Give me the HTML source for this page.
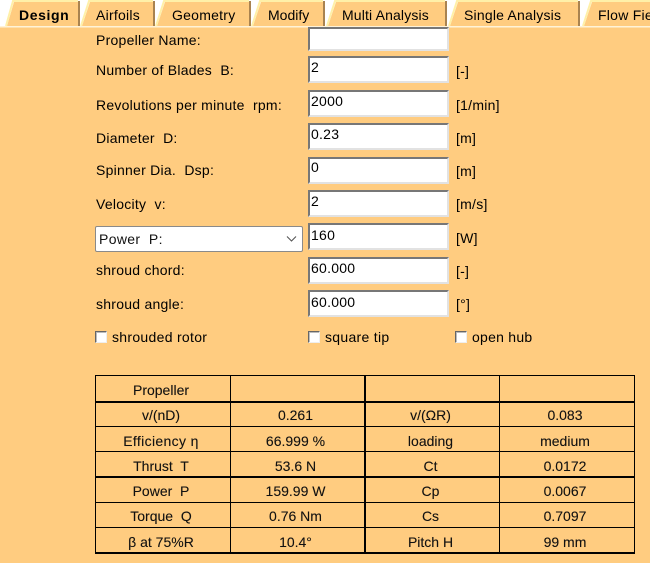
<!DOCTYPE html>
<html><head><meta charset="utf-8"><style>
html,body{margin:0;padding:0}
body{width:650px;height:563px;overflow:hidden;background:#ffcc80;position:relative;font-family:"Liberation Sans",sans-serif;font-size:14px;color:#000;letter-spacing:.25px}
.t{position:absolute;white-space:pre;line-height:16px}
.i{position:absolute;left:308px;width:137px;background:#fff;border:2px solid;border-color:#777 #e2e2e2 #e2e2e2 #777;line-height:16px;box-sizing:content-box}
.i span{position:absolute;left:1px;top:1px;color:#000;white-space:pre}
.c{position:absolute;width:10px;height:10px;top:331px;background:#fff;border:1px solid;border-color:#666 #eee #eee #666;box-shadow:inset 1px 1px 0 #bbb}
.g{position:absolute;background:#000}
.d{position:absolute;white-space:pre;text-align:center;font-size:14px;line-height:16px;color:#111;letter-spacing:0;text-shadow:0 0 .5px rgba(0,0,0,.4)}
</style></head><body>
<svg style="position:absolute;left:0;top:0" width="650" height="28">
<rect width="650" height="26" fill="#fff"/>
<rect y="26" width="650" height="1.5" fill="#fff3d8"/>
<g fill="#ffcc80" stroke="none">
<polygon points="7,26 14,2 78,2 78,26"/>
<polygon points="82,26 90,2 153,2 153,26"/>
<polygon points="157,26 165,2 249,2 249,26"/>
<polygon points="253,26 261,2 323,2 323,26"/>
<polygon points="328,26 336,2 445,2 445,26"/>
<polygon points="450,26 458,2 578,2 578,26"/>
<polygon points="584,26 592,2 650,2 650,26"/>
</g>
<g fill="none" stroke="#fff0a8" stroke-width="2">
<polyline points="6,26 13,1 78,1"/>
<polyline points="81,26 89,1 153,1"/>
<polyline points="156,26 164,1 249,1"/>
<polyline points="252,26 260,1 323,1"/>
<polyline points="327,26 335,1 445,1"/>
<polyline points="449,26 457,1 578,1"/>
<polyline points="583,26 591,1 650,1"/>
</g>
<g fill="#a98350">
<rect x="78" y="1" width="2" height="25"/>
<rect x="153" y="1" width="2" height="25"/>
<rect x="249" y="1" width="2" height="25"/>
<rect x="323" y="1" width="2" height="25"/>
<rect x="445" y="1" width="2" height="25"/>
<rect x="578" y="1" width="2" height="25"/>
</g>
</svg>
<div class="t" style="left:19px;top:7px;font-weight:bold;letter-spacing:.6px">Design</div>
<div class="t" style="left:96px;top:7px">Airfoils</div>
<div class="t" style="left:172px;top:7px">Geometry</div>
<div class="t" style="left:268px;top:7px;letter-spacing:0">Modify</div>
<div class="t" style="left:342px;top:7px;letter-spacing:.15px">Multi Analysis</div>
<div class="t" style="left:464px;top:7px;letter-spacing:.2px">Single Analysis</div>
<div class="t" style="left:598px;top:7px">Flow Field</div>

<div class="t" style="left:96px;top:32px">Propeller Name:</div>
<div class="t" style="left:96px;top:62px">Number of Blades  B:</div>
<div class="t" style="left:96px;top:97px">Revolutions per minute  rpm:</div>
<div class="t" style="left:96px;top:130px">Diameter  D:</div>
<div class="t" style="left:96px;top:162px">Spinner Dia.  Dsp:</div>
<div class="t" style="left:96px;top:196px">Velocity  v:</div>
<div class="t" style="left:96px;top:262px">shroud chord:</div>
<div class="t" style="left:96px;top:296px">shroud angle:</div>

<div class="i" style="top:27px;height:20px"></div>
<div class="i" style="top:56px;height:23px"><span>2</span></div>
<div class="i" style="top:90px;height:23px"><span>2000</span></div>
<div class="i" style="top:123px;height:23px"><span>0.23</span></div>
<div class="i" style="top:157px;height:23px"><span style="top:0">0</span></div>
<div class="i" style="top:190px;height:23px"><span>2</span></div>
<div class="i" style="top:223px;height:23px"><span style="top:2px">160</span></div>
<div class="i" style="top:257px;height:23px"><span>60.000</span></div>
<div class="i" style="top:290px;height:23px"><span style="top:2px">60.000</span></div>

<div class="t" style="left:456px;top:63px">[-]</div>
<div class="t" style="left:456px;top:97px">[1/min]</div>
<div class="t" style="left:456px;top:130px">[m]</div>
<div class="t" style="left:456px;top:163px">[m]</div>
<div class="t" style="left:456px;top:196px">[m/s]</div>
<div class="t" style="left:456px;top:230px">[W]</div>
<div class="t" style="left:456px;top:263px">[-]</div>
<div class="t" style="left:456px;top:296px">[°]</div>

<div style="position:absolute;left:95px;top:226px;width:206px;height:24px;background:#fff;border:1px solid #8a8a8a;border-radius:2px"></div>
<div class="t" style="left:99px;top:231px;color:#111;letter-spacing:.35px">Power  P:</div>
<svg style="position:absolute;left:286px;top:235px" width="12" height="8"><path d="M1 1.5 L5.5 6 L10 1.5" fill="none" stroke="#555" stroke-width="1.1"/></svg>

<div class="c" style="left:95px"></div><div class="t" style="left:112px;top:329px;letter-spacing:.3px">shrouded rotor</div>
<div class="c" style="left:308px"></div><div class="t" style="left:325px;top:329px;letter-spacing:.3px">square tip</div>
<div class="c" style="left:455px"></div><div class="t" style="left:472px;top:329px">open hub</div>

<div class="g" style="left:95px;top:375px;width:540px;height:1px"></div>
<div class="g" style="left:95px;top:401px;width:540px;height:2px"></div>
<div class="g" style="left:95px;top:426px;width:540px;height:1px"></div>
<div class="g" style="left:95px;top:451px;width:540px;height:1px"></div>
<div class="g" style="left:95px;top:476px;width:540px;height:2px"></div>
<div class="g" style="left:95px;top:502px;width:540px;height:1px"></div>
<div class="g" style="left:95px;top:527px;width:540px;height:1px"></div>
<div class="g" style="left:95px;top:552px;width:540px;height:2px"></div>
<div class="g" style="left:95px;top:375px;width:1px;height:179px"></div>
<div class="g" style="left:230px;top:375px;width:1px;height:179px"></div>
<div class="g" style="left:364px;top:375px;width:2px;height:179px"></div>
<div class="g" style="left:499px;top:375px;width:1px;height:179px"></div>
<div class="g" style="left:634px;top:375px;width:1px;height:179px"></div>

<div class="d" style="left:94px;width:134px;top:382px">Propeller</div>
<div class="d" style="left:94px;width:134px;top:407px">v/(nD)</div>
<div class="d" style="left:229px;width:133px;top:407px">0.261</div>
<div class="d" style="left:364px;width:133px;top:407px">v/(ΩR)</div>
<div class="d" style="left:498px;width:134px;top:407px">0.083</div>
<div class="d" style="left:94px;width:134px;top:433px;letter-spacing:.35px">Efficiency η</div>
<div class="d" style="left:229px;width:133px;top:433px">66.999 %</div>
<div class="d" style="left:364px;width:133px;top:433px">loading</div>
<div class="d" style="left:498px;width:134px;top:433px">medium</div>
<div class="d" style="left:94px;width:134px;top:458px">Thrust  T</div>
<div class="d" style="left:229px;width:133px;top:458px">53.6 N</div>
<div class="d" style="left:364px;width:133px;top:458px">Ct</div>
<div class="d" style="left:498px;width:134px;top:458px">0.0172</div>
<div class="d" style="left:94px;width:134px;top:483px">Power  P</div>
<div class="d" style="left:229px;width:133px;top:483px">159.99 W</div>
<div class="d" style="left:364px;width:133px;top:483px">Cp</div>
<div class="d" style="left:498px;width:134px;top:483px">0.0067</div>
<div class="d" style="left:94px;width:134px;top:508px">Torque  Q</div>
<div class="d" style="left:229px;width:133px;top:508px">0.76 Nm</div>
<div class="d" style="left:364px;width:133px;top:508px">Cs</div>
<div class="d" style="left:498px;width:134px;top:508px">0.7097</div>
<div class="d" style="left:94px;width:134px;top:534px">β at 75%R</div>
<div class="d" style="left:229px;width:133px;top:534px">10.4°</div>
<div class="d" style="left:364px;width:133px;top:534px">Pitch H</div>
<div class="d" style="left:498px;width:134px;top:534px">99 mm</div>
</body></html>
